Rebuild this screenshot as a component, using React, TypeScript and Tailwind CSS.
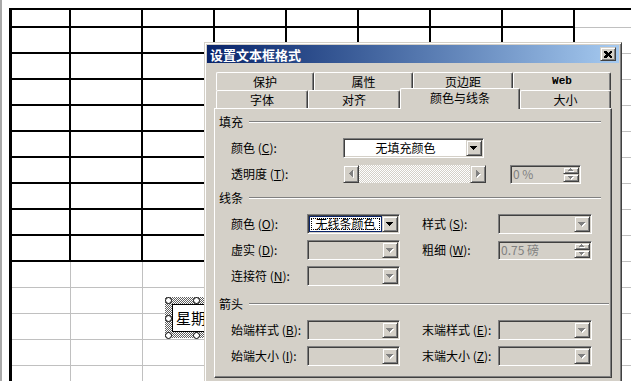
import type { ReactNode } from 'react'

// classic win2k 3D edges
const RAISED =
  'border border-t-[#d4d0c8] border-l-[#d4d0c8] border-r-[#404040] border-b-[#404040] shadow-[inset_1px_1px_#fff,inset_-1px_-1px_#808080]'
const SUNKEN =
  'border border-t-[#808080] border-l-[#808080] border-r-white border-b-white shadow-[inset_1px_1px_#404040,inset_-1px_-1px_#d4d0c8]'
const DITHER =
  'bg-[image:repeating-conic-gradient(#d4d0c8_0%_25%,#fff_0%_50%)] bg-[length:2px_2px]'

type Dir = 'up' | 'down' | 'left' | 'right' | 'upS' | 'downS'
type Px = [number, number, number, number]

const PIX: Record<Dir, Px[]> = {
  down: [[0, 0, 7, 1], [1, 1, 5, 1], [2, 2, 3, 1], [3, 3, 1, 1]],
  up: [[3, 0, 1, 1], [2, 1, 3, 1], [1, 2, 5, 1], [0, 3, 7, 1]],
  left: [[3, 0, 1, 7], [2, 1, 1, 5], [1, 2, 1, 3], [0, 3, 1, 1]],
  right: [[0, 0, 1, 7], [1, 1, 1, 5], [2, 2, 1, 3], [3, 3, 1, 1]],
  upS: [[2, 0, 1, 1], [1, 1, 3, 1], [0, 2, 5, 1]],
  downS: [[0, 0, 5, 1], [1, 1, 3, 1], [2, 2, 1, 1]],
}

const SIZE: Record<Dir, [number, number]> = {
  down: [8, 5],
  up: [8, 5],
  left: [5, 8],
  right: [5, 8],
  upS: [6, 4],
  downS: [6, 4],
}

function Arrow({ dir, off }: { dir: Dir; off?: boolean }) {
  const [w, h] = SIZE[dir]
  return (
    <svg width={w} height={h} shapeRendering="crispEdges">
      {off &&
        PIX[dir].map(([x, y, rw, rh], i) => (
          <rect key={'s' + i} x={x + 1} y={y + 1} width={rw} height={rh} fill="#fff" />
        ))}
      {PIX[dir].map(([x, y, rw, rh], i) => (
        <rect key={i} x={x} y={y} width={rw} height={rh} fill={off ? '#808080' : '#000'} />
      ))}
    </svg>
  )
}

function Label({ text, k, w, className = '' }: { text: string; k: string; w: string; className?: string }) {
  return (
    <div className={`${w} shrink-0 whitespace-nowrap ${className}`}>
      {text} (<u>{k}</u>):
    </div>
  )
}

function Combo({ w, text, on, focus }: { w: string; text?: string; on?: boolean; focus?: boolean }) {
  return (
    <div className={`flex h-[20px] ${w} p-px ${SUNKEN} ${on || focus ? 'bg-white' : 'bg-[#d4d0c8]'}`}>
      {focus ? (
        <div className="flex-1 border border-[#0a246a] p-px">
          <div className="flex h-full items-center justify-center border border-dotted border-black leading-none">
            {text}
          </div>
        </div>
      ) : (
        <div className="flex flex-1 items-center justify-center leading-none">{text}</div>
      )}
      <div className={`flex w-[16px] items-center justify-center bg-[#d4d0c8] ${RAISED}`}>
        <Arrow dir="down" off={!on && !focus} />
      </div>
    </div>
  )
}

function Spin({ w, text }: { w: string; text: string }) {
  return (
    <div className={`flex h-[19px] ${w} p-px ${SUNKEN} bg-[#d4d0c8]`}>
      <div className="flex flex-1 items-center pl-px leading-none text-[#808080]">{text}</div>
      <div className="flex w-[16px] flex-col">
        <div className={`flex flex-1 items-center justify-center ${RAISED}`}>
          <Arrow dir="upS" off />
        </div>
        <div className={`flex flex-1 items-center justify-center ${RAISED}`}>
          <Arrow dir="downS" off />
        </div>
      </div>
    </div>
  )
}

function Group({ title, pr, className = '' }: { title: string; pr: string; className?: string }) {
  return (
    <div className={`flex h-[14px] items-center pl-[4px] ${pr} ${className}`}>
      <span className="leading-none">{title}</span>
      <div className="ml-[6px] h-[2px] flex-1 border-t border-b border-t-[#808080] border-b-white" />
    </div>
  )
}

function Row({ children, className = '' }: { children: ReactNode; className?: string }) {
  return <div className={`flex h-[26px] items-center pl-[16px] ${className}`}>{children}</div>
}

function Tab({ w, children, sel }: { w: string; children: ReactNode; sel?: boolean }) {
  return (
    <div
      className={`flex ${w} shrink-0 items-center justify-center rounded-t-[2px] border-t border-l border-r border-t-white border-l-white border-r-[#404040] bg-[#d4d0c8] shadow-[inset_-1px_0_#808080] ${
        sel ? 'relative z-10 -mb-px h-[21px] pb-[2px]' : 'h-[18px]'
      }`}
    >
      {children}
    </div>
  )
}

function Sheet() {
  const rows = Array.from({ length: 15 }, (_, r) => r)
  const cols = Array.from({ length: 8 }, (_, c) => c)
  return (
    <div className="mt-[8px] ml-[7px] border-t-2 border-l-[3px] border-black">
      {rows.map((r) => {
        const bold = r < 10
        return (
          <div key={r} className={`flex ${r === 0 ? 'h-[18px]' : 'h-[26px]'}`}>
            {cols.map((c) => (
              <div
                key={c}
                className={`shrink-0 ${c === 0 ? 'w-[59px]' : 'w-[72px]'} ${
                  bold ? 'border-r-2 border-b-2 border-black' : 'border-r border-b border-[#c0c0c0]'
                }`}
              />
            ))}
            <div className="flex-1 border-b border-[#c0c0c0]" />
          </div>
        )
      })}
    </div>
  )
}

export default function App() {
  return (
    <div className="relative h-[381px] w-[631px] overflow-hidden border-l-2 border-[#a8a8a8] bg-white font-['Noto_Sans_CJK_SC',sans-serif] text-[12px] text-black">
      <Sheet />

      {/* selected text box */}
      <div className={`absolute left-[163px] top-[297px] h-[41px] w-[60px] bg-[image:repeating-conic-gradient(#606060_0%_25%,#fff_0%_50%)] bg-[length:2px_2px]`}>
        <div className="absolute left-[7px] top-[7px] h-[28px] w-[60px] border border-black bg-white pl-[3px] text-[15px] leading-[26px]">
          星期
        </div>
        <div className="absolute left-0 top-0 h-[7px] w-[7px] rounded-full border border-black bg-white" />
        <div className="absolute left-[28px] top-0 h-[7px] w-[7px] rounded-full border border-black bg-white" />
        <div className="absolute left-0 top-[18px] h-[7px] w-[7px] rounded-full border border-black bg-white" />
        <div className="absolute left-0 top-[35px] h-[7px] w-[7px] rounded-full border border-black bg-white" />
        <div className="absolute left-[28px] top-[35px] h-[7px] w-[7px] rounded-full border border-black bg-white" />
      </div>

      {/* format dialog */}
      <div className={`absolute left-[202px] top-[42px] h-[350px] w-[418px] bg-[#d4d0c8] p-[2px] ${RAISED}`}>
        <div className="flex h-[18px] items-center justify-between bg-linear-to-r from-[#0a246a] to-[#a6caf0] pl-[3px] pr-[3px]">
          <span className="text-[13px] font-bold leading-none text-white">设置文本框格式</span>
          <div className={`flex h-[14px] w-[16px] items-center justify-center bg-[#d4d0c8] ${RAISED}`}>
            <svg width="8" height="7" shapeRendering="crispEdges">
              <path d="M0 0h2l2 2 2-2h2v1l-2 2.5 2 2.5v1h-2l-2-2-2 2h-2v-1l2-2.5-2-2.5z" fill="#000" />
            </svg>
          </div>
        </div>

        <div className="ml-[7px] mt-[9px] w-[398px]">
          <div className="ml-[2px] flex">
            <Tab w="w-[98px]">保护</Tab>
            <Tab w="w-[99px]">属性</Tab>
            <Tab w="w-[100px]">页边距</Tab>
            <Tab w="w-[98px]">
              <span className="font-['Liberation_Mono',monospace] text-[11px] font-bold">Web</span>
            </Tab>
          </div>
          <div className="ml-[2px] flex h-[18px] items-end">
            <Tab w="w-[92px]">字体</Tab>
            <Tab w="w-[92px]">对齐</Tab>
            <Tab w="w-[120px]" sel>
              颜色与线条
            </Tab>
            <Tab w="w-[91px]">大小</Tab>
          </div>

          <div className="h-[270px] border border-t-white border-l-white border-r-[#404040] border-b-[#404040] shadow-[inset_-1px_-1px_#808080]">
            <Group title="填充" pr="pr-[10px]" className="mt-[6px]" />
            <Row className="mt-[6px]">
              <Label text="颜色" k="C" w="w-[112px]" />
              <Combo w="w-[141px]" text="无填充颜色" on />
            </Row>
            <Row>
              <Label text="透明度" k="T" w="w-[112px]" />
              <div className="flex h-[18px] w-[143px]">
                <div className={`flex w-[16px] items-center justify-center ${RAISED}`}>
                  <Arrow dir="left" off />
                </div>
                <div className={`flex-1 ${DITHER}`} />
                <div className={`flex w-[16px] items-center justify-center ${RAISED}`}>
                  <Arrow dir="right" off />
                </div>
              </div>
              <div className="ml-[24px]">
                <Spin w="w-[71px]" text="0 %" />
              </div>
            </Row>

            <Group title="线条" pr="pr-[10px]" className="mt-[4px]" />
            <Row className="mt-[6px]">
              <Label text="颜色" k="O" w="w-[76px]" />
              <Combo w="w-[93px]" text="无线条颜色" focus />
              <Label text="样式" k="S" w="w-[76px]" className="ml-[22px]" />
              <Combo w="w-[94px]" />
            </Row>
            <Row>
              <Label text="虚实" k="D" w="w-[76px]" />
              <Combo w="w-[93px]" />
              <Label text="粗细" k="W" w="w-[76px]" className="ml-[22px]" />
              <Spin w="w-[94px]" text="0.75 磅" />
            </Row>
            <Row>
              <Label text="连接符" k="N" w="w-[76px]" />
              <Combo w="w-[93px]" />
            </Row>

            <Group title="箭头" pr="pr-[2px]" className="mt-[8px]" />
            <Row className="mt-[6px]">
              <Label text="始端样式" k="B" w="w-[76px]" />
              <Combo w="w-[93px]" />
              <Label text="末端样式" k="E" w="w-[76px]" className="ml-[22px]" />
              <Combo w="w-[94px]" />
            </Row>
            <Row>
              <Label text="始端大小" k="I" w="w-[76px]" />
              <Combo w="w-[93px]" />
              <Label text="末端大小" k="Z" w="w-[76px]" className="ml-[22px]" />
              <Combo w="w-[94px]" />
            </Row>
          </div>
        </div>
      </div>
    </div>
  )
}
